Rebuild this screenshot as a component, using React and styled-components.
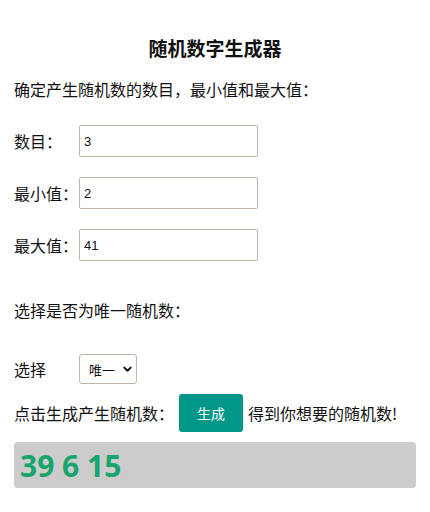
import styled, { createGlobalStyle } from "styled-components";
import { useState } from "react";

const GlobalStyle = createGlobalStyle`
    body {
        margin: 0;
        background: #fff;
        font-family: "Noto Sans CJK SC", "Noto Sans", sans-serif;
        color: #111;
    }
`

const App = () => {
    const [count, setCount] = useState("3");
    const [min, setMin] = useState("2");
    const [max, setMax] = useState("41");
    const [unique, setUnique] = useState("unique");
    const [result, setResult] = useState([39, 6, 15]);

    const generate = () => {
        const n = parseInt(count) || 0;
        const lo = parseInt(min) || 0;
        const hi = parseInt(max) || 0;
        const out = [];
        let guard = 0;
        while (out.length < n && guard < 1000) {
            guard++;
            const v = Math.floor(Math.random() * (hi - lo + 1)) + lo;
            if (unique === "unique" && out.includes(v)) continue;
            out.push(v);
        }
        setResult(out);
    };

    return (
        <Page>
            <GlobalStyle />
            <Title>随机数字生成器</Title>
            <Line $top={17}>确定产生随机数的数目，最小值和最大值：</Line>

            <Field $top={24}>
                <Label>数目：</Label>
                <Input value={count} onChange={e => setCount(e.target.value)} />
            </Field>
            <Field $top={20}>
                <Label>最小值：</Label>
                <Input value={min} onChange={e => setMin(e.target.value)} />
            </Field>
            <Field $top={20}>
                <Label>最大值：</Label>
                <Input value={max} onChange={e => setMax(e.target.value)} />
            </Field>

            <Line $top={37}>选择是否为唯一随机数：</Line>

            <Field $top={32}>
                <Label>选择</Label>
                <SelectWrap>
                    <Select value={unique} onChange={e => setUnique(e.target.value)}>
                        <option value="unique">唯一</option>
                        <option value="repeat">可重复</option>
                    </Select>
                    <Chevron width="9" height="7" viewBox="0 0 9 7">
                        <path d="M1.3 1.6 L4.5 4.8 L7.7 1.6" fill="none" stroke="#111" strokeWidth="2" strokeLinecap="round" strokeLinejoin="round" />
                    </Chevron>
                </SelectWrap>
            </Field>

            <ActionRow>
                <span>点击生成产生随机数：</span>
                <Button onClick={generate}>生成</Button>
                <span>得到你想要的随机数!</span>
            </ActionRow>

            <Result>{result.join(" ")}</Result>
        </Page>
    )
}

export default App;

const Page = styled.div`
    display: flex;
    flex-direction: column;
    padding: 0 14px;
    width: 430px;
    box-sizing: border-box;
`

const Title = styled.h3`
    margin: 0;
    padding-top: 36px;
    font-size: 19px;
    line-height: 24px;
    font-weight: 700;
    text-align: center;
`

const Line = styled.div`
    margin-top: ${p => p.$top}px;
    font-size: 16px;
    line-height: 24px;
`

const Field = styled.div`
    display: flex;
    align-items: center;
    margin-top: ${p => p.$top}px;
`

const Label = styled.span`
    width: 65px;
    flex-shrink: 0;
    font-size: 16px;
    line-height: 24px;
`

const Input = styled.input`
    width: 179px;
    height: 32px;
    box-sizing: border-box;
    padding: 0 4px;
    border: 1px solid #c2b3aa;
    border-radius: 2px;
    font-family: "Liberation Sans", Arial, sans-serif;
    font-size: 13px;
    color: #111;
    outline: none;
`

const SelectWrap = styled.div`
    position: relative;
    width: 58px;
    height: 30px;
`

const Select = styled.select`
    appearance: none;
    width: 100%;
    height: 100%;
    box-sizing: border-box;
    padding: 0 0 0 9px;
    border: 1px solid #c2b3aa;
    border-radius: 3px;
    background: #fff;
    font-family: "Noto Sans CJK SC", sans-serif;
    font-size: 13px;
    color: #111;
    outline: none;
`

const Chevron = styled.svg`
    position: absolute;
    right: 5px;
    top: 12px;
    pointer-events: none;
`

const ActionRow = styled.div`
    display: flex;
    align-items: center;
    gap: 5px;
    margin-top: 10px;
    font-size: 16px;
    line-height: 24px;
    white-space: nowrap;
`

const Button = styled.button`
    width: 64px;
    height: 38px;
    border: none;
    border-radius: 3px;
    background: #009688;
    color: #fff;
    font-family: "Noto Sans CJK SC", sans-serif;
    font-size: 14px;
    cursor: pointer;
`

const Result = styled.div`
    margin-top: 10px;
    height: 46px;
    box-sizing: border-box;
    padding: 0 6px;
    display: flex;
    align-items: center;
    background: #cccccc;
    border-radius: 4px;
    color: #17a56d;
    font-family: "Open Sans", sans-serif;
    font-weight: 700;
    font-size: 30px;
`
